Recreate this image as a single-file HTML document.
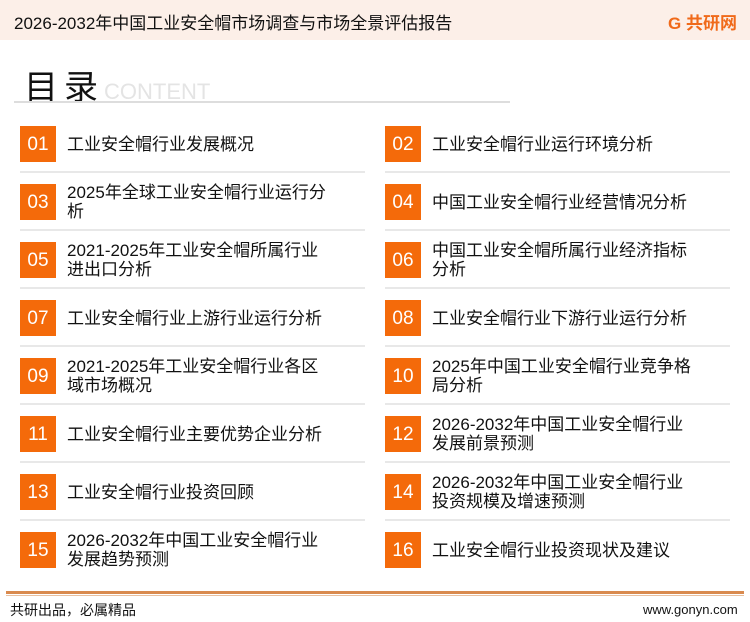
<!DOCTYPE html>
<html><head><meta charset="utf-8"><style>
*{margin:0;padding:0;box-sizing:border-box}
body{width:750px;height:622px;background:#fff;font-family:"Liberation Sans","Noto Sans CJK SC",sans-serif;position:relative;overflow:hidden;color:#111}
.hdr{position:absolute;left:0;top:0;width:750px;height:40px;background:#fcefe8}
.hdr .t{position:absolute;left:14px;top:9px;font-size:17px;color:#111;white-space:nowrap}
.logo{position:absolute;left:668px;top:9px;font-size:17px;font-weight:bold;color:#f06a1a}
.h1{position:absolute;left:24px;top:60px;font-size:34px;color:#111;letter-spacing:6px;white-space:nowrap}
.h1 span{font-size:22px;color:#e4e4e4;letter-spacing:0;margin-left:0px}
.hl{position:absolute;left:14px;top:101px;width:496px;height:2px;background:#ddd}
.it{position:absolute;width:345px;height:58px}
.it .b{position:absolute;left:0;top:0;width:36px;height:36px;background:#f46a0a;color:#fff;font-size:19px;text-align:center;line-height:38px}
.it .x{position:absolute;left:47px;top:0;height:36px;display:flex;align-items:center;font-size:17px;line-height:19px;width:300px;white-space:nowrap}
.it .l{position:absolute;left:0;top:45px;width:345px;height:2px;background:#e8e8e8}
.bl{position:absolute;left:6px;top:591px;width:738px;height:3px;background:#d98a4e}
.bl2{position:absolute;left:6px;top:595px;width:738px;height:1px;background:#e8c0a0}
.f1{position:absolute;left:10px;top:600px;font-size:14px}
.f2{position:absolute;left:643px;top:602px;font-size:13px}
</style></head><body>
<div class="hdr"><div class="t">2026-2032年中国工业安全帽市场调查与市场全景评估报告</div><div class="logo">G 共研网</div></div>
<div class="h1">目录<span>CONTENT</span></div>
<div class="hl"></div>

<div class="it" style="left:20px;top:126px"><div class="b">01</div><div class="x">工业安全帽行业发展概况</div><div class="l"></div></div>
<div class="it" style="left:385px;top:126px"><div class="b">02</div><div class="x">工业安全帽行业运行环境分析</div><div class="l"></div></div>
<div class="it" style="left:20px;top:184px"><div class="b">03</div><div class="x">2025年全球工业安全帽行业运行分<br>析</div><div class="l"></div></div>
<div class="it" style="left:385px;top:184px"><div class="b">04</div><div class="x">中国工业安全帽行业经营情况分析</div><div class="l"></div></div>
<div class="it" style="left:20px;top:242px"><div class="b">05</div><div class="x">2021-2025年工业安全帽所属行业<br>进出口分析</div><div class="l"></div></div>
<div class="it" style="left:385px;top:242px"><div class="b">06</div><div class="x">中国工业安全帽所属行业经济指标<br>分析</div><div class="l"></div></div>
<div class="it" style="left:20px;top:300px"><div class="b">07</div><div class="x">工业安全帽行业上游行业运行分析</div><div class="l"></div></div>
<div class="it" style="left:385px;top:300px"><div class="b">08</div><div class="x">工业安全帽行业下游行业运行分析</div><div class="l"></div></div>
<div class="it" style="left:20px;top:358px"><div class="b">09</div><div class="x">2021-2025年工业安全帽行业各区<br>域市场概况</div><div class="l"></div></div>
<div class="it" style="left:385px;top:358px"><div class="b">10</div><div class="x">2025年中国工业安全帽行业竞争格<br>局分析</div><div class="l"></div></div>
<div class="it" style="left:20px;top:416px"><div class="b">11</div><div class="x">工业安全帽行业主要优势企业分析</div><div class="l"></div></div>
<div class="it" style="left:385px;top:416px"><div class="b">12</div><div class="x">2026-2032年中国工业安全帽行业<br>发展前景预测</div><div class="l"></div></div>
<div class="it" style="left:20px;top:474px"><div class="b">13</div><div class="x">工业安全帽行业投资回顾</div><div class="l"></div></div>
<div class="it" style="left:385px;top:474px"><div class="b">14</div><div class="x">2026-2032年中国工业安全帽行业<br>投资规模及增速预测</div><div class="l"></div></div>
<div class="it" style="left:20px;top:532px"><div class="b">15</div><div class="x">2026-2032年中国工业安全帽行业<br>发展趋势预测</div></div>
<div class="it" style="left:385px;top:532px"><div class="b">16</div><div class="x">工业安全帽行业投资现状及建议</div></div>

<div class="bl"></div><div class="bl2"></div>
<div class="f1">共研出品，必属精品</div>
<div class="f2">www.gonyn.com</div>
</body></html>
